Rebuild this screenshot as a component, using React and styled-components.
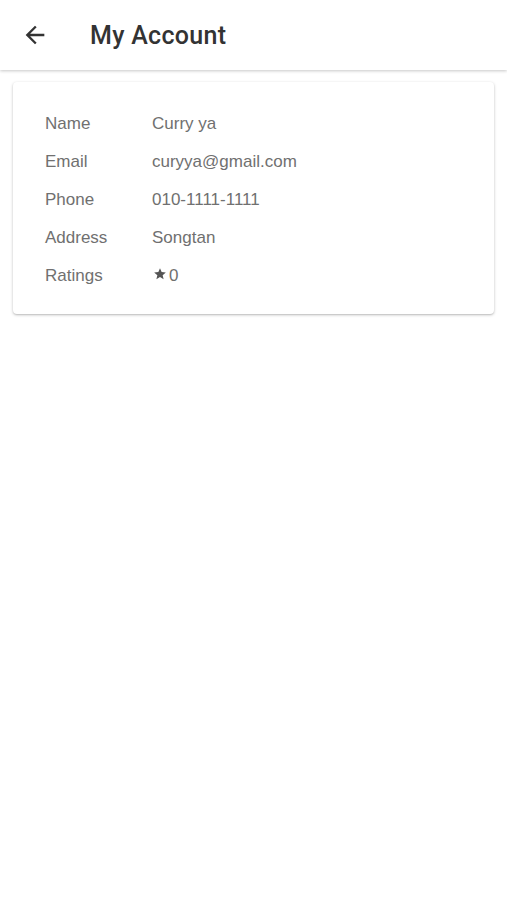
import React from "react";
import styled, { createGlobalStyle } from "styled-components";

const Global = createGlobalStyle`
  html, body { margin: 0; padding: 0; background: #fff; }
  body { font-family: "Liberation Sans", Arial, sans-serif; }
`;

const Page = styled.div`
  min-height: 900px;
  background: #fff;
`;

const Header = styled.header`
  height: 70px;
  display: flex;
  align-items: center;
  background: #fff;
  box-shadow: 0 1px 3px rgba(0,0,0,0.22);
  position: relative;
  z-index: 1;
`;

const BackButton = styled.button`
  border: 0;
  background: none;
  padding: 0;
  margin-left: 21px;
  width: 28px;
  height: 28px;
  display: flex;
  align-items: center;
  justify-content: center;
  color: #333;
  cursor: pointer;
`;

const Title = styled.h1`
  margin: 1px 0 0 41px;
  font-family: Roboto, "Liberation Sans", sans-serif;
  font-size: 25px;
  font-weight: 500;
  color: #333;
  letter-spacing: 0.3px;
`;

const Card = styled.section`
  margin: 12px 13px 0;
  background: #fff;
  border-radius: 4px;
  box-shadow: 0 1px 3px rgba(0,0,0,0.25), 0 1px 1px rgba(0,0,0,0.06);
  padding: 23px 32px 19px;
`;

const Row = styled.div`
  display: grid;
  grid-template-columns: 107px 1fr;
  height: 38px;
  align-items: center;
  font-family: "Liberation Sans", Arial, sans-serif;
  font-size: 17px;
  color: #707070;
`;

const Label = styled.span``;
const Value = styled.span`
  display: flex;
  align-items: center;
`;

const Star = styled.svg`
  width: 14px;
  height: 14px;
  margin: -5px 2px 0 1px;
  fill: #555;
`;

const rows = [
  ["Name", "Curry ya"],
  ["Email", "curyya@gmail.com"],
  ["Phone", "010-1111-1111"],
  ["Address", "Songtan"],
];

export default function App() {
  return (
    <Page>
      <Global />
      <Header>
        <BackButton aria-label="back">
          <svg width="28" height="28" viewBox="0 0 24 24" fill="#333">
            <path d="M20 11H7.83l5.59-5.59L12 4l-8 8 8 8 1.41-1.41L7.83 13H20v-2z" />
          </svg>
        </BackButton>
        <Title>My Account</Title>
      </Header>
      <Card>
        {rows.map(([l, v]) => (
          <Row key={l}>
            <Label>{l}</Label>
            <Value>{v}</Value>
          </Row>
        ))}
        <Row>
          <Label>Ratings</Label>
          <Value>
            <Star viewBox="0 0 24 24">
              <path d="M12 17.27L18.18 21l-1.64-7.03L22 9.24l-7.19-.61L12 2 9.19 8.63 2 9.24l5.46 4.73L5.82 21z" />
            </Star>
            0
          </Value>
        </Row>
      </Card>
    </Page>
  );
}
